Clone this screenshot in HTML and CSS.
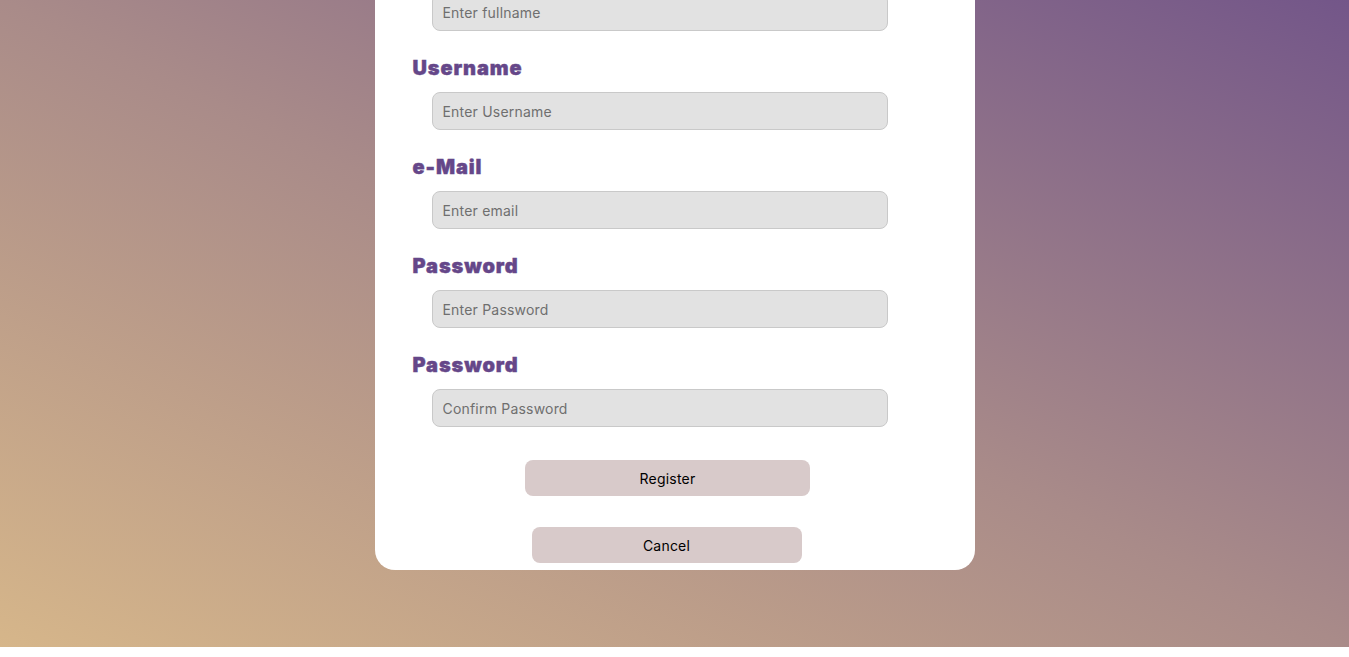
FILE: index.html
```html
<!DOCTYPE html>
<html lang="en">
<head>
<meta charset="utf-8">
<title>Register</title>
<link rel="stylesheet" href="styles.css">
</head>
<body>
<div class="page">
  <form class="card">
    <div class="field">
      <label class="label">Fullname</label>
      <input class="input" type="text" placeholder="Enter fullname">
    </div>
    <div class="field">
      <label class="label">Username</label>
      <input class="input" type="text" placeholder="Enter Username">
    </div>
    <div class="field">
      <label class="label">e-Mail</label>
      <input class="input" type="email" placeholder="Enter email">
    </div>
    <div class="field">
      <label class="label">Password</label>
      <input class="input" type="password" placeholder="Enter Password">
    </div>
    <div class="field">
      <label class="label">Password</label>
      <input class="input" type="password" placeholder="Confirm Password">
    </div>
    <div class="actions">
      <button type="button" class="btn btn-register">Register</button>
      <button type="button" class="btn btn-cancel">Cancel</button>
    </div>
  </form>
</div>
</body>
</html>
```
FILE: styles.css
```css
html, body {
  margin: 0;
  padding: 0;
  background: #ffffff;
}
body {
  font-family: Inter, "Open Sans", sans-serif;
}
.page {
  height: 647px;
  box-sizing: border-box;
  padding-bottom: 77px;
  display: flex;
  justify-content: center;
  align-items: flex-end;
  overflow: hidden;
  background: linear-gradient(to top right, #d6b68a 0%, #a98b89 50%, #735689 100%);
}
.card {
  width: 600px;
  flex-shrink: 0;
  box-sizing: border-box;
  background: #ffffff;
  border-radius: 20px;
  padding: 30px 0 7px 38px;
  display: flex;
  flex-direction: column;
}
.field {
  display: flex;
  flex-direction: column;
  margin-bottom: 25px;
}
.label {
  display: block;
  height: 24px;
  line-height: 24px;
  font-size: 20px;
  font-weight: 900;
  color: #654789;
  letter-spacing: 0.9px;
  -webkit-text-stroke: 0.4px #654789;
}
.input {
  margin: 12px 0 0 19px;
  width: 456px;
  height: 38px;
  box-sizing: border-box;
  border: 1px solid #c9c9c9;
  border-radius: 8px;
  background: #e2e2e2;
  padding: 0 10px;
  font-family: Inter, "Open Sans", sans-serif;
  font-size: 14px;
  letter-spacing: 0.2px;
  color: #333;
  outline: none;
}
.input::placeholder {
  color: #6f6f6f;
}
.actions {
  display: flex;
  flex-direction: column;
  align-items: center;
  padding: 8px 54px 0 0;
  gap: 31px;
}
.btn {
  height: 36px;
  border: none;
  border-radius: 8px;
  background: #d8caca;
  color: #000;
  font-family: Inter, "Open Sans", sans-serif;
  font-size: 14px;
  font-weight: 400;
  letter-spacing: 0.2px;
  cursor: pointer;
}
.btn-register {
  width: 285px;
  margin-left: 2px;
}
.btn-cancel {
  width: 270px;
}
```
